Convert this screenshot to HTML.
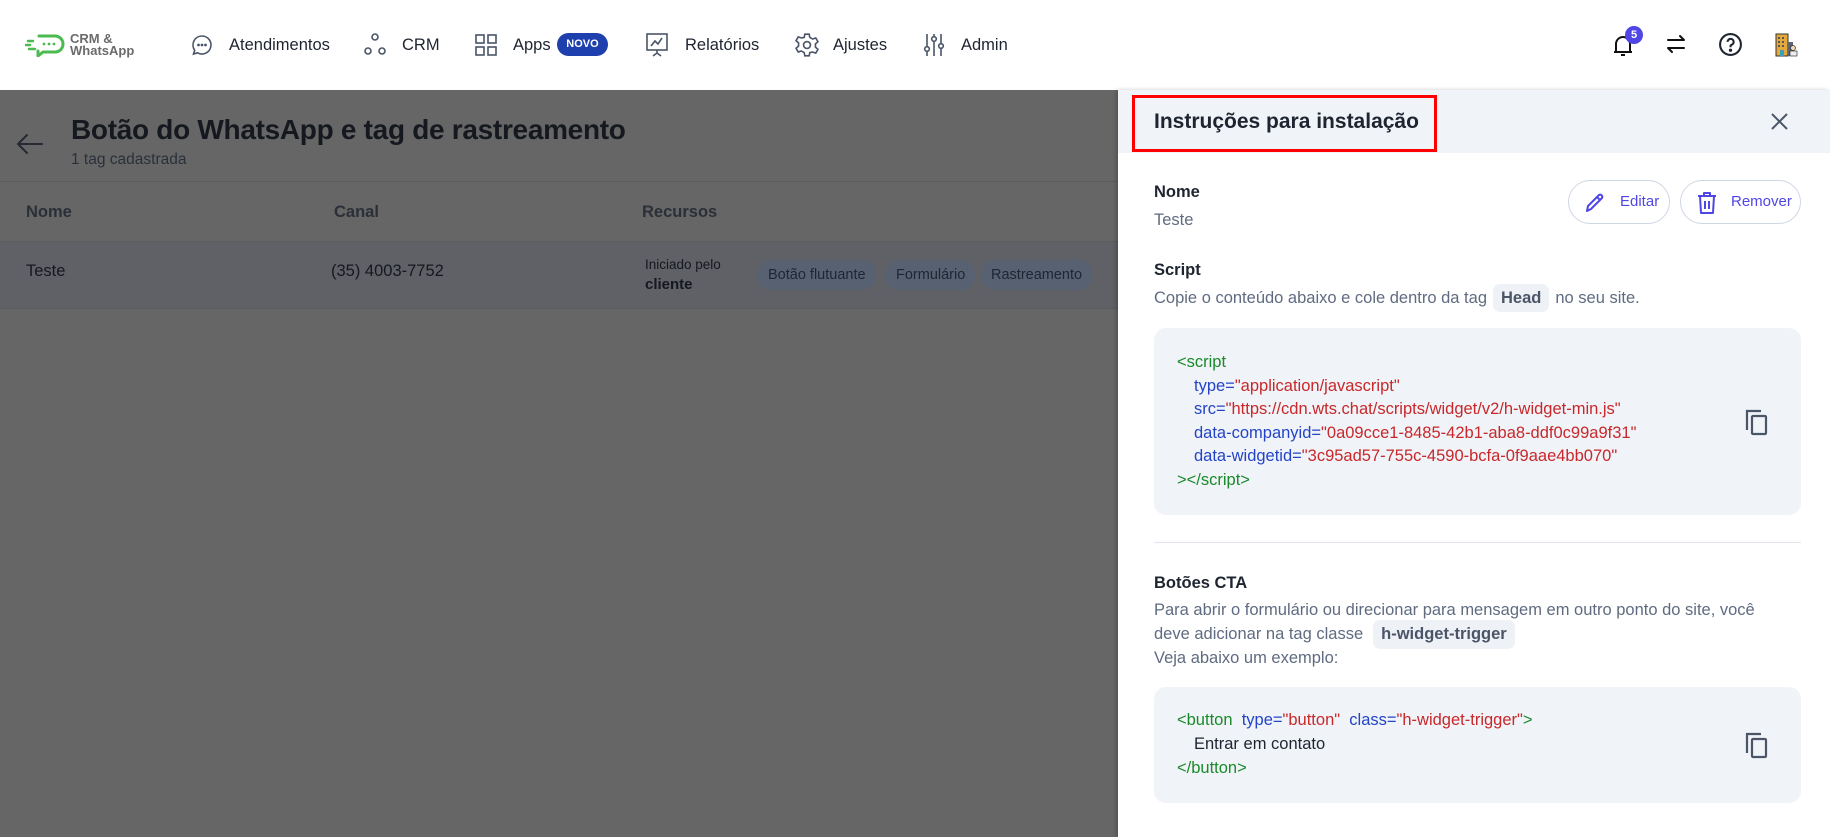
<!DOCTYPE html>
<html><head><meta charset="utf-8">
<style>
*{margin:0;padding:0;box-sizing:border-box}
body{width:1830px;height:837px;overflow:hidden;font-family:"Liberation Sans",sans-serif;background:#fff;position:relative;color:#1e2430}
.a{position:absolute;white-space:nowrap}
.nav{font-size:16.5px;color:#1e2430;top:36px}
.hdr{position:absolute;left:0;top:0;width:1830px;height:90px;background:#fff}
.ov{position:absolute;left:0;top:90px;width:1118px;height:747px;background:#666}
.panel{position:absolute;left:1118px;top:90px;width:712px;height:747px;background:#fff;box-shadow:-2px 0 4px rgba(0,0,0,.2)}
.code{position:absolute;left:1154px;width:647px;background:#f0f3f8;border-radius:12px}
.cl{position:absolute;font-size:16.5px;white-space:nowrap}
.g{color:#1a8a2a}.b{color:#2344c8}.r{color:#c8282a}
.chip{position:absolute;background:#576172;color:#1e2632;font-size:14.5px;border-radius:14px;height:30px;line-height:30px;padding:0 10px;top:260px}
.btn{position:absolute;top:180px;height:44px;border:1px solid #cfd6e4;border-radius:22px;color:#4f46e5;font-size:15px;line-height:42px}
.muted{color:#5f6b80}
.kw{display:inline-block;background:#eef1f6;border-radius:7px;font-weight:bold;color:#4a5568;padding:0 8px;line-height:28px;margin:0 6px}
</style></head><body>
<div class="hdr"></div>
<svg class="a" style="left:25px;top:33px" width="40" height="24" viewBox="0 0 40 24"><path d="M14 3h16a8 8 0 0 1 0 16H18l-5 4v-5" fill="none" stroke="#4cbb4f" stroke-width="3" stroke-linecap="round" stroke-linejoin="round"/><circle cx="19" cy="11" r="1.4" fill="#4cbb4f"/><circle cx="24" cy="11" r="1.4" fill="#4cbb4f"/><circle cx="29" cy="11" r="1.4" fill="#4cbb4f"/><path d="M3 8h5M1 12h4M4 16h6" stroke="#4cbb4f" stroke-width="2.5" stroke-linecap="round"/></svg>
<div class="a" style="left:70px;top:33px;font-size:13px;line-height:11.5px;font-weight:bold;color:#6b6b6b">CRM &amp;<br>WhatsApp</div>
<svg class="a" style="left:190px;top:33px" width="24" height="24" viewBox="0 0 24 24" fill="none" stroke="#4a5568" stroke-width="1.6"><path d="M12 3a9 9 0 1 1-4.5 16.8L3.5 21l1.2-3.7A9 9 0 0 1 12 3z"/><circle cx="8.5" cy="12" r=".6" fill="#4a5568"/><circle cx="12" cy="12" r=".6" fill="#4a5568"/><circle cx="15.5" cy="12" r=".6" fill="#4a5568"/></svg>
<div class="a nav" style="left:229px">Atendimentos</div>
<svg class="a" style="left:363px;top:32px" width="24" height="26" viewBox="0 0 24 26" fill="none" stroke="#4a5568" stroke-width="1.6"><circle cx="12" cy="5" r="3"/><circle cx="5" cy="19" r="3"/><circle cx="19" cy="19" r="3"/></svg>
<div class="a nav" style="left:402px">CRM</div>
<svg class="a" style="left:474px;top:33px" width="24" height="24" viewBox="0 0 24 24" fill="none" stroke="#4a5568" stroke-width="1.6"><rect x="2" y="2" width="8" height="8"/><rect x="14" y="2" width="8" height="8"/><rect x="2" y="14" width="8" height="8"/><rect x="14" y="14" width="8" height="8"/></svg>
<div class="a nav" style="left:513px">Apps</div>
<div class="a" style="left:557px;top:33px;width:51px;height:23px;border-radius:12px;background:#1e3fae;color:#fff;font-size:11px;font-weight:bold;text-align:center;line-height:23px">NOVO</div>
<svg class="a" style="left:645px;top:32px" width="24" height="26" viewBox="0 0 24 26" fill="none" stroke="#4a5568" stroke-width="1.6"><rect x="2" y="2" width="20" height="16"/><path d="M6 14l4-5 3 3 4-6M12 18v3M8 24l4-3 4 3"/></svg>
<div class="a nav" style="left:685px">Relatórios</div>
<svg class="a" style="left:794px;top:32px" width="26" height="26" viewBox="0 0 24 24" fill="none" stroke="#4a5568" stroke-width="1.5"><circle cx="12" cy="12" r="3.2"/><path d="M10 2h4l.6 3 2.6 1.5 2.9-1 2 3.5-2.3 2v3l2.3 2-2 3.5-2.9-1L14.6 19 14 22h-4l-.6-3-2.6-1.5-2.9 1-2-3.5 2.3-2v-3l-2.3-2 2-3.5 2.9 1L9.4 5z"/></svg>
<div class="a nav" style="left:833px">Ajustes</div>
<svg class="a" style="left:922px;top:32px" width="24" height="26" viewBox="0 0 24 26" fill="none" stroke="#4a5568" stroke-width="1.6"><path d="M5 2v22M12 2v22M19 2v22"/><circle cx="5" cy="17" r="2.3" fill="#fff"/><circle cx="12" cy="7" r="2.3" fill="#fff"/><circle cx="19" cy="14" r="2.3" fill="#fff"/></svg>
<div class="a nav" style="left:961px">Admin</div>
<svg class="a" style="left:1611px;top:33px" width="24" height="26" viewBox="0 0 24 26" fill="none" stroke="#111" stroke-width="2"><path d="M5 19V11a7 7 0 0 1 14 0v8H3h18M10 22h4"/></svg>
<div class="a" style="left:1625px;top:26px;width:18px;height:18px;border-radius:9px;background:#4f46e5;color:#fff;font-size:11px;font-weight:bold;text-align:center;line-height:18px">5</div>
<svg class="a" style="left:1664px;top:32px" width="24" height="24" viewBox="0 0 24 24" fill="none" stroke="#111" stroke-width="2" stroke-linecap="round" stroke-linejoin="round"><path d="M4 8h16l-4-4M20 16H4l4 4"/></svg>
<svg class="a" style="left:1718px;top:32px" width="25" height="25" viewBox="0 0 24 24" fill="none" stroke="#1e2430" stroke-width="2"><circle cx="12" cy="12" r="10"/><path d="M9.2 9.5a2.9 2.9 0 1 1 4 2.7c-.8.4-1.2 1-1.2 1.8v.6"/><circle cx="12" cy="17.5" r=".6" fill="#1e2430"/></svg>
<svg class="a" style="left:1774px;top:33px" width="24" height="24" viewBox="0 0 24 24"><rect x="2" y="1" width="12" height="22" fill="#e5a83a" stroke="#333" stroke-width="1"/><g fill="#555"><rect x="4" y="4" width="2" height="2"/><rect x="8" y="4" width="2" height="2"/><rect x="4" y="8" width="2" height="2"/><rect x="8" y="8" width="2" height="2"/><rect x="4" y="12" width="2" height="2"/><rect x="8" y="12" width="2" height="2"/></g><rect x="6" y="17" width="4" height="6" fill="#3aa0c0"/><rect x="14" y="9" width="5" height="14" fill="#5b6470"/><circle cx="19" cy="15" r="2.5" fill="#f3d7b5" stroke="#333" stroke-width=".7"/><rect x="16" y="18" width="7" height="5" fill="#eee" stroke="#333" stroke-width=".7"/></svg>

<div class="ov"></div>
<svg class="a" style="left:16px;top:133px" width="28" height="22" viewBox="0 0 28 22" fill="none" stroke="#252a33" stroke-width="2" stroke-linecap="round" stroke-linejoin="round"><path d="M26 11H3M11 2L2 11l9 9"/></svg>
<div class="a" style="left:71px;top:114px;font-size:28px;font-weight:bold;color:#15181e;letter-spacing:-0.3px">Botão do WhatsApp e tag de rastreamento</div>
<div class="a" style="left:71px;top:151px;font-size:15.5px;color:#2a303a">1 tag cadastrada</div>
<div class="a" style="left:0;top:181px;width:1118px;height:1px;background:#5a5c60"></div>
<div class="a" style="left:26px;top:203px;font-size:16.5px;font-weight:bold;color:#2a2f38">Nome</div>
<div class="a" style="left:334px;top:203px;font-size:16.5px;font-weight:bold;color:#2a2f38">Canal</div>
<div class="a" style="left:642px;top:203px;font-size:16.5px;font-weight:bold;color:#2a2f38">Recursos</div>
<div class="a" style="left:0;top:241px;width:1118px;height:68px;background:#5f6166;border-top:1px solid #5a5c60;border-bottom:1px solid #5a5c60"></div>
<div class="a" style="left:26px;top:262px;font-size:16.5px;color:#15181e">Teste</div>
<div class="a" style="left:331px;top:262px;font-size:16.5px;color:#15181e">(35) 4003-7752</div>
<div class="a" style="left:645px;top:257px;font-size:13.5px;color:#15181e">Iniciado pelo</div>
<div class="a" style="left:645px;top:276px;font-size:15px;font-weight:bold;color:#15181e">cliente</div>
<div class="chip" style="left:758px">Botão flutuante</div>
<div class="chip" style="left:886px">Formulário</div>
<div class="chip" style="left:981px">Rastreamento</div>

<div class="panel"></div>
<div class="a" style="left:1118px;top:90px;width:712px;height:63px;background:#f0f3f8"></div>
<div class="a" style="left:1132px;top:95px;width:305px;height:57px;border:3px solid #f00"></div>
<div class="a" style="left:1154px;top:110px;font-size:21px;font-weight:bold;color:#1e2430">Instruções para instalação</div>
<svg class="a" style="left:1771px;top:113px" width="17" height="17" viewBox="0 0 17 17" stroke="#4a5568" stroke-width="2"><path d="M1 1l15 15M16 1L1 16"/></svg>

<div class="a" style="left:1154px;top:183px;font-size:16.5px;font-weight:bold">Nome</div>
<div class="a muted" style="left:1154px;top:211px;font-size:16.5px">Teste</div>
<div class="btn" style="left:1568px;width:102px"><svg class="a" style="left:14px;top:10px" width="24" height="24" viewBox="0 0 24 24" fill="none" stroke="#4f46e5" stroke-width="2" stroke-linejoin="round"><path d="M4 20l1-5L16 4a2.2 2.2 0 0 1 3 3L8 18z M14 6l3 3"/></svg><span class="a" style="left:51px;top:0">Editar</span></div>
<div class="btn" style="left:1680px;width:121px"><svg class="a" style="left:15px;top:10px" width="22" height="24" viewBox="0 0 22 24" fill="none" stroke="#4f46e5" stroke-width="2" stroke-linejoin="round"><path d="M2 5h18M8 5V2h6v3M4 5l1 17h12l1-17M9 10v8M13 10v8"/></svg><span class="a" style="left:50px;top:0">Remover</span></div>

<div class="a" style="left:1154px;top:261px;font-size:16.5px;font-weight:bold">Script</div>
<div class="a muted" style="left:1154px;top:284px;font-size:16.5px;line-height:28px">Copie o conteúdo abaixo e cole dentro da tag<span class="kw">Head</span>no seu site.</div>

<div class="code" style="top:328px;height:187px"></div>
<div class="cl g" style="left:1177px;top:353px">&lt;script</div>
<div class="cl" style="left:1194px;top:377px"><span class="b">type=</span><span class="r">"application/javascript"</span></div>
<div class="cl" style="left:1194px;top:400px"><span class="b">src=</span><span class="r">"https://cdn.wts.chat/scripts/widget/v2/h-widget-min.js"</span></div>
<div class="cl" style="left:1194px;top:424px"><span class="b">data-companyid=</span><span class="r">"0a09cce1-8485-42b1-aba8-ddf0c99a9f31"</span></div>
<div class="cl" style="left:1194px;top:447px"><span class="b">data-widgetid=</span><span class="r">"3c95ad57-755c-4590-bcfa-0f9aae4bb070"</span></div>
<div class="cl g" style="left:1177px;top:471px">&gt;&lt;/script&gt;</div>
<svg class="a" style="left:1744px;top:408px" width="26" height="28" viewBox="0 0 26 28" fill="none" stroke="#4a5568" stroke-width="2.2"><path d="M3 22V3h14"/><rect x="8" y="8" width="14" height="18" rx="1"/></svg>

<div class="a" style="left:1154px;top:542px;width:647px;height:1px;background:#e2e6ec"></div>

<div class="a" style="left:1154px;top:574px;font-size:16.5px;font-weight:bold">Botões CTA</div>
<div class="a muted" style="left:1154px;top:601px;font-size:16.5px">Para abrir o formulário ou direcionar para mensagem em outro ponto do site, você</div>
<div class="a muted" style="left:1154px;top:620px;font-size:16.5px;line-height:29px">deve adicionar na tag classe<span class="kw" style="line-height:29px;margin-left:10px">h-widget-trigger</span></div>
<div class="a muted" style="left:1154px;top:649px;font-size:16.5px">Veja abaixo um exemplo:</div>

<div class="code" style="top:687px;height:116px"></div>
<div class="cl" style="left:1177px;top:711px"><span class="g">&lt;button</span>&nbsp; <span class="b">type=</span><span class="r">"button"</span>&nbsp; <span class="b">class=</span><span class="r">"h-widget-trigger"</span><span class="g">&gt;</span></div>
<div class="cl" style="left:1194px;top:735px;color:#1e2430">Entrar em contato</div>
<div class="cl g" style="left:1177px;top:759px">&lt;/button&gt;</div>
<svg class="a" style="left:1744px;top:731px" width="26" height="28" viewBox="0 0 26 28" fill="none" stroke="#4a5568" stroke-width="2.2"><path d="M3 22V3h14"/><rect x="8" y="8" width="14" height="18" rx="1"/></svg>
</body></html>
